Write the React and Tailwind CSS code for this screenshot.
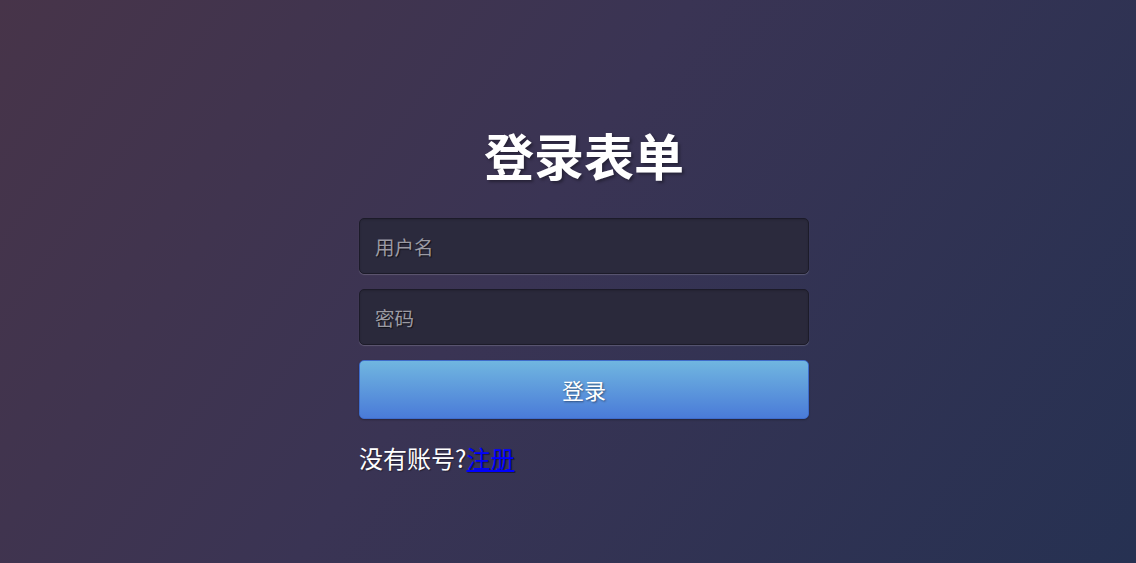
export default function App() {
  const font = { fontFamily: '"Noto Sans CJK SC", "Noto Sans", sans-serif' };
  return (
    <div
      className="w-full h-[563px] bg-[linear-gradient(125deg,#473449_0%,#3a3454_45%,#263152_100%)] flex flex-col items-center pt-[124px] pl-[32px]"
      style={font}
    >
      <div className="w-[450px] flex flex-col">
        <h1 className="text-[50px] leading-[60px] font-bold text-white text-center [text-shadow:2px_2px_3px_rgba(0,0,0,0.35)] mb-[34px]">
          登录表单
        </h1>
        <input
          type="text"
          placeholder="用户名"
          className="h-[56px] w-full rounded-[5px] bg-[#2b2a3d] border border-[#1c1b29] px-[15px] text-[19.5px] text-white placeholder:text-[#9b9aa3] shadow-[0_1px_1px_rgba(255,255,255,0.18),inset_0_1px_2px_rgba(0,0,0,0.15)] outline-none [text-shadow:1px_1px_1px_rgba(0,0,0,0.6)]"
        />
        <input
          type="password"
          placeholder="密码"
          className="mt-[15px] h-[56px] w-full rounded-[5px] bg-[#2a293b] border border-[#1c1b29] px-[15px] text-[19.5px] text-white placeholder:text-[#9b9aa3] shadow-[0_1px_1px_rgba(255,255,255,0.18),inset_0_1px_2px_rgba(0,0,0,0.15)] outline-none [text-shadow:1px_1px_1px_rgba(0,0,0,0.6)]"
        />
        <button className="mt-[15px] h-[59px] w-full rounded-[5px] bg-[linear-gradient(to_bottom,#70b6e0,#4a7bd8)] border border-[#3e6ccb] text-white text-[22px] [text-shadow:1px_1px_2px_rgba(0,0,0,0.45)] shadow-[0_1px_2px_rgba(0,0,0,0.3)]">
          登录
        </button>
        <p className="mt-[21px] text-[24px] leading-[36px] text-white [text-shadow:1px_1px_1px_rgba(0,0,0,0.4)]">
          没有账号?<a href="#" className="text-[#0000ff] underline">注册</a>
        </p>
      </div>
    </div>
  );
}
